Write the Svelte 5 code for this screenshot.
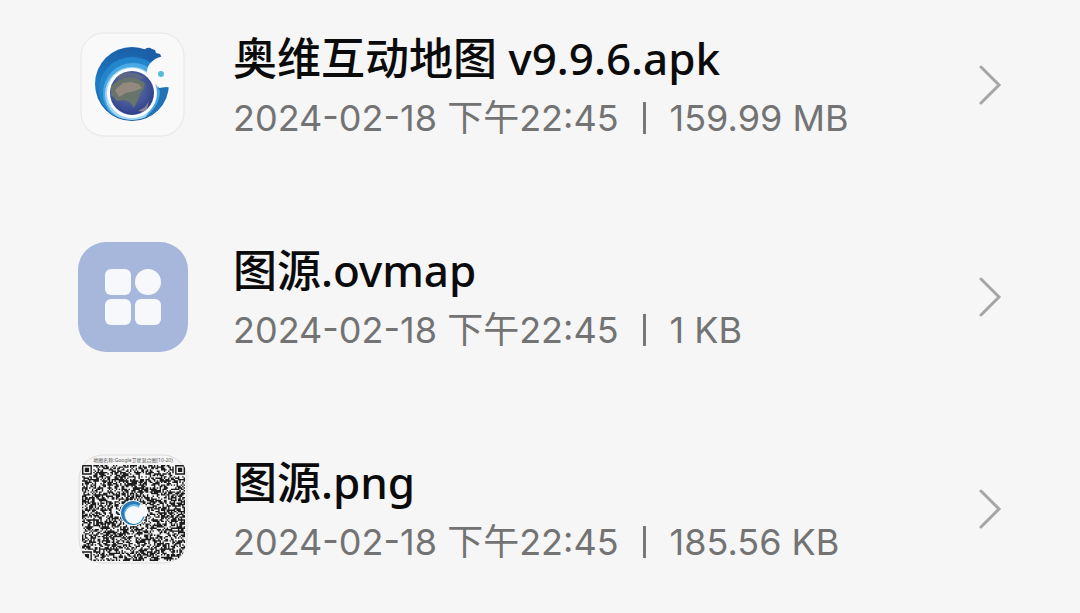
<script lang="ts">
  type Kind = 'apk' | 'map' | 'qr';

  interface FileItem {
    name: string;
    date: string;
    size: string;
    kind: Kind;
  }

  const files: FileItem[] = [
    { name: '奥维互动地图 v9.9.6.apk', date: '2024-02-18 下午22:45', size: '159.99 MB', kind: 'apk' },
    { name: '图源.ovmap', date: '2024-02-18 下午22:45', size: '1 KB', kind: 'map' },
    { name: '图源.png', date: '2024-02-18 下午22:45', size: '185.56 KB', kind: 'qr' }
  ];

  const cols = 73;
  const rows = 69;

  // finder pattern with its top left corner at (cx, cy); null outside of it
  const finder = (x: number, y: number, cx: number, cy: number) => {
    const dx = x - cx;
    const dy = y - cy;
    if (dx < -1 || dy < -1 || dx > 7 || dy > 7) return null;
    const d = Math.max(Math.abs(dx - 3), Math.abs(dy - 3));
    return d === 3 || d < 2;
  };

  const buildCode = () => {
    let seed = 20240218;
    let d = '';
    for (let y = 0; y < rows; y++) {
      for (let x = 0; x < cols; x++) {
        seed = (seed * 48271) % 2147483647;
        const mark = finder(x, y, 0, 0) ?? finder(x, y, cols - 7, 0) ?? finder(x, y, 0, rows - 7);
        if (mark ?? seed / 2147483647 < 0.55) d += `M${x} ${y}h1v1h-1z`;
      }
    }
    return d;
  };

  const code = buildCode();
</script>

<main>
  <ul class="files">
    {#each files as file}
      <li>
        <button class="file" type="button">
          <span class="thumb">
            {#if file.kind === 'apk'}
              <svg viewBox="0 0 110 110" aria-hidden="true">
                <defs>
                  <radialGradient id="globe" cx="0.45" cy="0.4" r="0.6">
                    <stop offset="0" stop-color="#6d7a8c" />
                    <stop offset="0.6" stop-color="#46599a" />
                    <stop offset="1" stop-color="#2f3f8c" />
                  </radialGradient>
                  <linearGradient id="ring" x1="0" y1="0" x2="0" y2="1">
                    <stop offset="0" stop-color="#1a5fa8" />
                    <stop offset="0.5" stop-color="#1f7cc4" />
                    <stop offset="1" stop-color="#175a9c" />
                  </linearGradient>
                  <clipPath id="globe-clip"><circle cx="54" cy="63" r="22" /></clipPath>
                  <clipPath id="disc-clip"><circle cx="54" cy="54" r="36" /></clipPath>
                </defs>
                <rect x="3" y="3" width="103" height="103" rx="23" fill="#f9f9f9" stroke="#e6e6e6" />
                <circle cx="54" cy="54" r="37" fill="url(#ring)" />
                <path d="M66 20q4-4 8-1l3 1 1 3 4 1 2 4-8 5-12-6z" fill="#1a5fa8" />
                <g clip-path="url(#disc-clip)">
                  <circle cx="54" cy="60" r="33" fill="#2386cc" />
                  <circle cx="55" cy="63" r="30" fill="#4aa9e2" />
                  <circle cx="54" cy="64" r="27" fill="#a4d6f2" />
                  <path d="M79 46l14 8c-1 20-14 35-30 37 12-9 20-25 16-45z" fill="#2272b8" />
                  <path d="M76 53l6 8c0 10-6 20-14 25 7-10 11-20 8-33z" fill="#4ba7e0" />
                </g>
                <circle cx="54" cy="63" r="25" fill="#fbfcfe" />
                <circle cx="54" cy="63" r="22" fill="url(#globe)" />
                <g clip-path="url(#globe-clip)">
                  <path d="M33 56l8-6 9-3 8 1 9 5-1 6-4 4-2 7-4 8-4-6-6-2-7 1-6-6z" fill="#68736a" />
                  <path d="M37 60l8-7 8-1 8 2 3 4-7 3-9 2-7 4z" fill="#94897f" />
                  <path d="M35 48l9-6 14 1 9 5-7 1-10-3-8 3z" fill="#5e6884" />
                  <path d="M60 81l7-4 4-6-3 11z" fill="#8a858f" />
                </g>
                <path
                  d="M85 26C77 28 69 33 69 42c0 4 3 7 6 10 3 2 5 4 6 6 4 0 7-2 11 0l4 1V34z"
                  fill="#f9f9f9"
                />
                <circle cx="83" cy="44" r="3" fill="#55bbd9" />
              </svg>
            {:else if file.kind === 'map'}
              <svg viewBox="0 0 110 110" aria-hidden="true">
                <rect width="110" height="110" rx="28" fill="#a7b6db" />
                <g fill="#f7f8fc">
                  <rect x="27" y="27" width="26" height="26" rx="6" />
                  <circle cx="70" cy="40" r="13" />
                  <rect x="27" y="57" width="26" height="26" rx="6" />
                  <rect x="57" y="57" width="26" height="26" rx="6" />
                </g>
              </svg>
            {:else}
              <svg viewBox="0 0 110 110" aria-hidden="true">
                <defs>
                  <clipPath id="code-clip"><rect x="1" y="1" width="108" height="108" rx="22" /></clipPath>
                </defs>
                <rect x="1" y="1" width="108" height="108" rx="24" fill="#f5f5f5" stroke="#dcdcdc" />
                <g clip-path="url(#code-clip)">
                  <text class="caption" x="55" y="8">地图名称:Google卫星混合图(10-20)</text>
                  <svg x="4" y="11" width="103" height="96" viewBox="0 0 {cols} {rows}" preserveAspectRatio="none">
                    <path d={code} fill="#1c1c1c" />
                  </svg>
                </g>
                <circle cx="55" cy="59" r="13" fill="#f4f8fb" />
                <circle cx="55" cy="59" r="12" fill="#2779b8" />
                <circle cx="56" cy="60" r="10" fill="#6db9e4" />
                <circle cx="56" cy="61" r="9" fill="#f6fafd" />
                <path d="M62 50l-2 7 3 6 6-1v-9z" fill="#f6fafd" />
              </svg>
            {/if}
          </span>
          <span class="info">
            <span class="name">{file.name}</span>
            <span class="meta">
              <span>{file.date}</span>
              <span class="divider"></span>
              <span>{file.size}</span>
            </span>
          </span>
          <svg class="chevron" viewBox="0 0 24 40" aria-hidden="true">
            <path d="M3 2l18 18L3 38" />
          </svg>
        </button>
      </li>
    {/each}
  </ul>
</main>

<style>
  :global(body) {
    margin: 0;
    background: #f6f6f6;
  }

  main {
    padding: 26px 78px 0;
    font-family: 'Noto Sans', 'Noto Sans CJK SC', sans-serif;
  }

  .files {
    display: grid;
    gap: 94px;
    margin: 0;
    padding: 0;
    list-style: none;
  }

  .file {
    display: flex;
    align-items: center;
    width: 100%;
    padding: 0;
    border: none;
    background: none;
    color: #0b0b0b;
    font: inherit;
    text-align: left;
    cursor: pointer;
  }

  .thumb {
    flex: none;
    width: 110px;
    height: 110px;
    margin-right: 45px;
  }

  .thumb svg {
    display: block;
  }

  .caption {
    font-size: 5px;
    fill: #555555;
    text-anchor: middle;
  }

  .info {
    flex: 1;
    display: flex;
    flex-direction: column;
    gap: 2px;
    min-width: 0;
  }

  .name {
    font-size: 44px;
    font-weight: 500;
    line-height: 64px;
  }

  .meta {
    display: flex;
    align-items: center;
    color: #737373;
    font-family: Inter, 'Noto Sans CJK SC', sans-serif;
    font-size: 36px;
    line-height: 52px;
  }

  .divider {
    width: 3px;
    height: 32px;
    margin: 0 24px;
    background: #777777;
  }

  .chevron {
    flex: none;
    width: 24px;
    height: 40px;
    fill: none;
    stroke: #a6a6a6;
    stroke-width: 3;
    stroke-linecap: round;
  }
</style>
